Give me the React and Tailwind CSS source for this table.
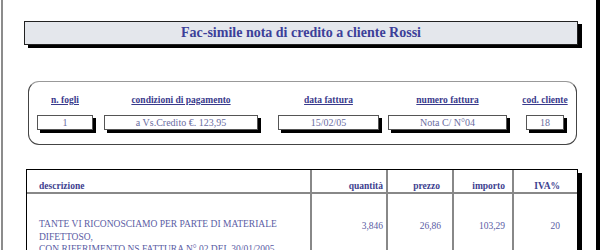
export default function App() {
  const serif = "font-['Liberation_Serif',serif]";
  const cols = [
    { label: "n. fogli", value: "1", w: "w-[56px]", box: "w-[56px]", gap: "" },
    { label: "condizioni di pagamento", value: "a Vs.Credito €. 123,95", w: "w-[154px]", box: "w-[154px]", gap: "ml-[11px]" },
    { label: "data fattura", value: "15/02/05", w: "w-[101px]", box: "w-[101px]", gap: "ml-[20px]" },
    { label: "numero fattura", value: "Nota C/ N°04", w: "w-[119px]", box: "w-[119px]", gap: "ml-[9px]" },
    { label: "cod. cliente", value: "18", w: "w-[46px]", box: "w-[38px]", gap: "ml-[15px]" },
  ];

  return (
    <div className={`w-[600px] h-[250px] overflow-hidden bg-white flex ${serif}`}>
      <div className="w-px shrink-0" />
      <div className="w-[2px] shrink-0 bg-[#8c8c8c]" />

      <div className="flex-1 flex flex-col">
        {/* title bar */}
        <div className="shrink-0 mt-[21px] ml-[21px] w-[554px] h-[24px] border border-[#222] bg-[#e4e7ec] shadow-[4px_3px_0_#000] flex items-center justify-center">
          <span className="text-[14px] font-bold leading-[20px] text-[#3c3f99]">
            Fac-simile nota di credito a cliente Rossi
          </span>
        </div>

        {/* document info */}
        <div className="shrink-0 mt-[36px] ml-[25px] w-[549px] h-[64px] rounded-[11px] border border-[#444] border-t-[#999] pt-[12px] pl-[8px] flex">
          {cols.map((c) => (
            <div key={c.label} className={`${c.w} ${c.gap} flex flex-col items-center shrink-0`}>
              <span className="text-[9.5px] font-bold leading-[12px] underline text-[#393a8c] whitespace-nowrap">
                {c.label}
              </span>
              <div className={`${c.box} mt-[9px] h-[15px] border border-[#555] bg-white shadow-[3px_3px_0_#000] flex items-center justify-center`}>
                <span className="text-[10px] leading-[13px] text-[#6b6d9f] whitespace-nowrap">{c.value}</span>
              </div>
            </div>
          ))}
        </div>

        {/* items table */}
        <div className="shrink-0 mt-[24px] ml-[23px] w-[552px] border border-black bg-white shadow-[4px_4px_0_#000] flex flex-col">
          <div className="flex h-[24px] border-b-2 border-[#888] text-[9.5px] font-bold leading-[12px] text-[#3d3f8f]">
            <div className="w-[283px] pl-[12px] pt-[10px]">descrizione</div>
            <div className="w-[76px] border-l-2 border-[#888] pr-[3px] pt-[10px] text-right">quantità</div>
            <div className="w-[66px] border-l-2 border-[#888] pr-[12px] pt-[10px] text-right">prezzo</div>
            <div className="w-[60px] border-l-2 border-[#888] pr-[7px] pt-[10px] text-right">importo</div>
            <div className="flex-1 border-l-2 border-[#888] pr-[17px] pt-[10px] text-right">IVA%</div>
          </div>
          <div className="flex h-[80px] text-[9.5px] leading-[12.5px] text-[#5a5ca4]">
            <div className="w-[283px] pl-[12px] pt-[24px]">
              TANTE VI RICONOSCIAMO PER PARTE DI MATERIALE
              <br />
              DIFETTOSO,
              <br />
              CON RIFERIMENTO NS FATTURA N° 02 DEL 30/01/2005
            </div>
            <div className="w-[76px] border-l-2 border-[#888] pr-[3px] pt-[26px] text-right">3,846</div>
            <div className="w-[66px] border-l-2 border-[#888] pr-[11px] pt-[26px] text-right">26,86</div>
            <div className="w-[60px] border-l-2 border-[#888] pr-[7px] pt-[26px] text-right">103,29</div>
            <div className="flex-1 border-l-2 border-[#888] pr-[17px] pt-[26px] text-right">20</div>
          </div>
        </div>
      </div>

      <div className="w-[4px] shrink-0 bg-black" />
    </div>
  );
}
